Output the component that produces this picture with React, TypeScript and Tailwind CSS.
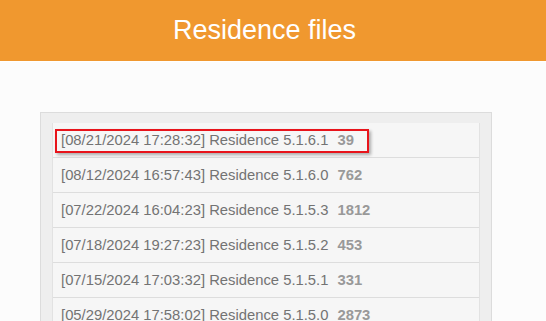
const files = [
  { date: "08/21/2024 17:28:32", version: "5.1.6.1", count: 39 },
  { date: "08/12/2024 16:57:43", version: "5.1.6.0", count: 762 },
  { date: "07/22/2024 16:04:23", version: "5.1.5.3", count: 1812 },
  { date: "07/18/2024 19:27:23", version: "5.1.5.2", count: 453 },
  { date: "07/15/2024 17:03:32", version: "5.1.5.1", count: 331 },
  { date: "05/29/2024 17:58:02", version: "5.1.5.0", count: 2873 },
];

export default function App() {
  return (
    <div className="min-h-screen bg-[#fcfcfc] font-['Liberation_Sans',Arial,sans-serif] overflow-hidden">
      <header className="h-[62px] bg-[#f0982f] border-b border-white flex items-center justify-center pr-[17px]">
        <h1 className="text-[27px] text-white leading-none -mt-[1px]">Residence files</h1>
      </header>
      <main className="pt-[50px] pl-[40px]">
        <div className="w-[452px] bg-[#eeeeee] border border-[#dcdcdc] pt-[10px] px-[11px] pb-[10px]">
          <ul className="bg-[#f6f6f6] border-x border-[#e2e2e2]">
            {files.map((f, i) => (
              <li
                key={f.version}
                className="relative h-[35px] border-b border-[#dddddd] flex items-center pl-[8px] pt-[1px] text-[14.8px] text-[#737373]"
              >
                <span>
                  [{f.date}] Residence {f.version}
                </span>
                <span className="ml-[9px] font-bold text-[#999999]">{f.count}</span>
                {i === 0 && (
                  <div className="absolute left-[2px] top-[6px] w-[314px] h-[24px] border-2 border-[#e8141b] shadow-[2px_2px_3px_rgba(0,0,0,0.3)]" />
                )}
              </li>
            ))}
          </ul>
        </div>
      </main>
    </div>
  );
}
